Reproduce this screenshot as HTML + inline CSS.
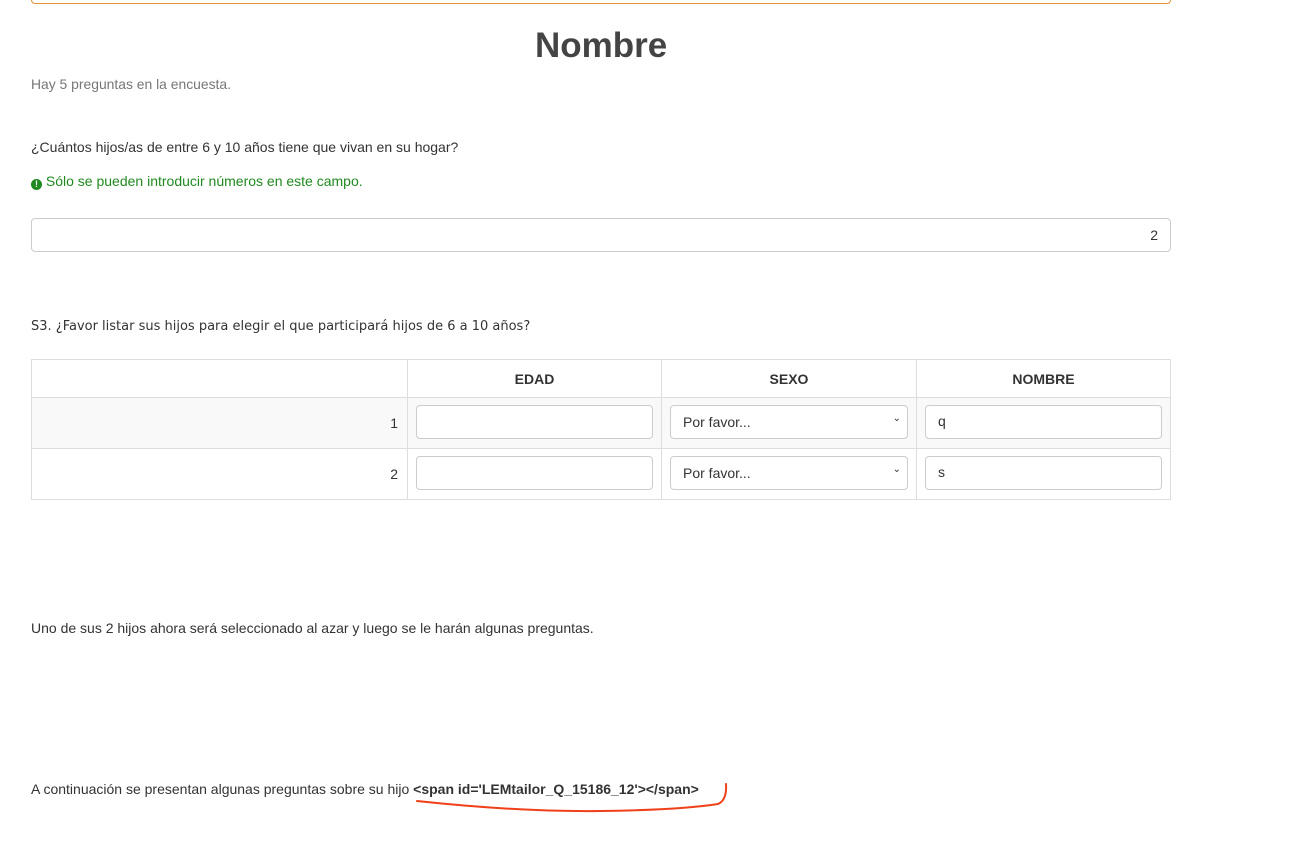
<!DOCTYPE html>
<html><head><meta charset="utf-8"><style>
body{margin:0;width:1314px;height:847px;background:#fff;font-family:"Liberation Sans",sans-serif;color:#333;position:relative;overflow:hidden}
.a{position:absolute;font-size:14px;white-space:nowrap}
.box{position:absolute;border:1px solid #ccc;border-radius:4px;background:#fff;box-sizing:border-box}
table{position:absolute;left:31px;top:359px;border-collapse:collapse;font-size:14px}
td{border:1px solid #ddd;padding:0;box-sizing:border-box}
</style></head><body>
<div style="position:absolute;left:31px;top:-10px;width:1140px;height:14px;border:1px solid #e8923a;border-radius:4px;box-sizing:border-box"></div>
<div class="a" style="left:535px;top:26px;font-size:35px;font-weight:bold;color:#444">Nombre</div>
<div class="a" style="left:31px;top:76px;color:#777;font-size:13.9px">Hay 5 preguntas en la encuesta.</div>
<div class="a" style="left:31px;top:139px">¿Cuántos hijos/as de entre 6 y 10 años tiene que vivan en su hogar?</div>
<div class="a" style="left:31px;top:173px;color:#1f8a1f"><span style="display:inline-block;width:11px;height:11px;border-radius:50%;background:#1f8a1f;color:#fff;font-size:9px;font-weight:bold;text-align:center;line-height:11px;vertical-align:-1px">!</span> Sólo se pueden introducir números en este campo.</div>
<div class="box" style="left:31px;top:218px;width:1140px;height:34px"><span class="a" style="right:12px;top:8px">2</span></div>
<div class="a" style="left:31px;top:319px;font-family:'DejaVu Sans',sans-serif;font-size:13px">S3. ¿Favor listar sus hijos para elegir el que participará hijos de 6 a 10 años?</div>
<table>
<tr style="height:38px;font-weight:bold;text-align:center"><td style="width:376px"></td><td style="width:254px">EDAD</td><td style="width:255px">SEXO</td><td style="width:254px">NOMBRE</td></tr>
<tr style="height:51px;background:#f9f9f9"><td style="text-align:right;padding-right:9px">1</td><td></td><td></td><td></td></tr>
<tr style="height:51px"><td style="text-align:right;padding-right:9px">2</td><td></td><td></td><td></td></tr>
</table>
<div class="box" style="left:416px;top:405px;width:237px;height:34px"></div>
<div class="box" style="left:416px;top:456px;width:237px;height:34px"></div>
<div class="box" style="left:670px;top:405px;width:238px;height:34px"><span class="a" style="left:12px;top:8px">Por favor...</span><span class="a" style="right:6px;top:7px;font-size:10px">&#8964;</span></div>
<div class="box" style="left:670px;top:456px;width:238px;height:34px"><span class="a" style="left:12px;top:8px">Por favor...</span><span class="a" style="right:6px;top:7px;font-size:10px">&#8964;</span></div>
<div class="box" style="left:925px;top:405px;width:237px;height:34px"><span class="a" style="left:12px;top:7px">q</span></div>
<div class="box" style="left:925px;top:456px;width:237px;height:34px"><span class="a" style="left:12px;top:7px">s</span></div>
<div class="a" style="left:31px;top:620px">Uno de sus 2 hijos ahora será seleccionado al azar y luego se le harán algunas preguntas.</div>
<div class="a" style="left:31px;top:781px">A continuación se presentan algunas preguntas sobre su hijo <b>&lt;span id='LEMtailor_Q_15186_12'&gt;&lt;/span&gt;</b></div>
<svg style="position:absolute;left:0;top:0" width="1314" height="847"><path d="M417 801 Q520 812 600 811 Q680 810 718 804 Q727 800 726 784" fill="none" stroke="#f0401a" stroke-width="2" stroke-linecap="round"/></svg>
</body></html>
